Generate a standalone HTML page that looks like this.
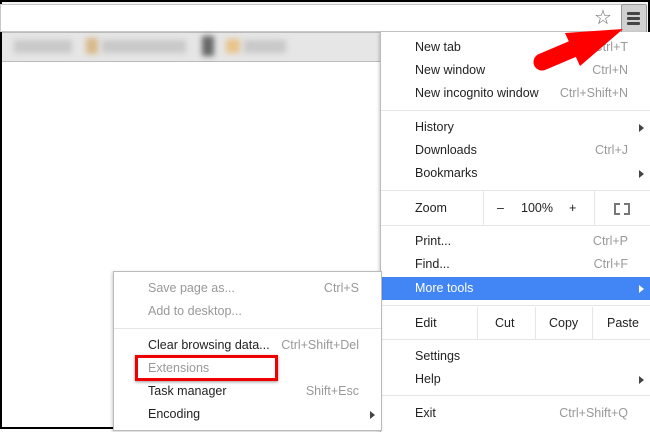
<!DOCTYPE html><html><head><style>
*{margin:0;padding:0;box-sizing:border-box}
body{width:650px;height:429px;overflow:hidden;background:#fff;font-family:"Liberation Sans",sans-serif;font-size:12.5px;color:#222;position:relative;border:2px solid #000}
.a{position:absolute}
.it{position:absolute;left:0;right:0;height:23px;line-height:23px}
.it .l{position:absolute;left:34px}
.it .r{position:absolute;right:22px;color:#999}
.sep{position:absolute;left:0;right:0;height:1px;background:#e6e6e6}
.tri{position:absolute;right:6px;top:8px;width:0;height:0;border-left:5px solid #444;border-top:4px solid transparent;border-bottom:4px solid transparent}
.g{color:#999}
</style></head><body>
<div class="a" style="left:0;top:0;width:646px;height:30px;background:#f2f2f2"></div>
<div class="a" style="left:-2px;top:2px;width:622px;height:28px;background:#fff;border:1px solid #c8c8c8"></div>
<div class="a" style="left:0;top:30px;width:646px;height:30px;background:#e6e6e6;border-top:1px solid #bbb;border-bottom:1px solid #bbb"></div>
<div class="a" style="left:12px;top:38px;width:58px;height:13px;background:#c8c8c8;filter:blur(3px)"></div>
<div class="a" style="left:84px;top:36px;width:12px;height:16px;background:#d8b888;filter:blur(3px)"></div>
<div class="a" style="left:100px;top:38px;width:84px;height:13px;background:#c8c8c8;filter:blur(3px)"></div>
<div class="a" style="left:200px;top:34px;width:12px;height:20px;background:#666;filter:blur(3px)"></div>
<div class="a" style="left:224px;top:37px;width:14px;height:14px;background:#e8c28a;filter:blur(3px)"></div>
<div class="a" style="left:242px;top:38px;width:42px;height:13px;background:#c8c8c8;filter:blur(3px)"></div>
<div class="a" style="left:592px;top:6px;font-size:20px;color:#666;line-height:20px">☆</div>
<div class="a" style="left:619px;top:2px;width:26px;height:29px;background:#d0d0d0;border:1px solid #999;border-radius:2px"></div>
<div class="a" style="left:625px;top:10px;width:13px;height:3px;background:#444;box-shadow:0 5px 0 #444,0 10px 0 #444;border-radius:1px"></div>

<div class="a" style="left:378px;top:30px;width:270px;height:400px;background:#fff;border-left:1px solid #bbb;box-shadow:-1px 1px 3px rgba(0,0,0,.2)">
<div class="it" style="top:4px"><span class="l">New tab</span><span class="r">Ctrl+T</span></div>
<div class="it" style="top:27px"><span class="l">New window</span><span class="r">Ctrl+N</span></div>
<div class="it" style="top:50px"><span class="l">New incognito window</span><span class="r">Ctrl+Shift+N</span></div>
<div class="sep" style="top:78px"></div>
<div class="it" style="top:84px"><span class="l">History</span><span class="tri"></span></div>
<div class="it" style="top:107px"><span class="l">Downloads</span><span class="r">Ctrl+J</span></div>
<div class="it" style="top:130px"><span class="l">Bookmarks</span><span class="tri"></span></div>
<div class="sep" style="top:158px"></div>
<div class="it" style="top:165px"><span class="l">Zoom</span>
<span class="a" style="left:102px;top:-6px;width:1px;height:34px;background:#e6e6e6"></span>
<span class="a" style="left:116px">–</span><span class="a" style="left:140px">100%</span><span class="a" style="left:188px">+</span>
<span class="a" style="left:213px;top:-6px;width:1px;height:34px;background:#e6e6e6"></span>
<span class="a" style="left:233px;top:6px;width:16px;height:12px;border:2px dashed #777"></span></div>
<div class="sep" style="top:193px"></div>
<div class="it" style="top:198px"><span class="l">Print...</span><span class="r">Ctrl+P</span></div>
<div class="it" style="top:221px"><span class="l">Find...</span><span class="r">Ctrl+F</span></div>
<div class="it" style="top:245px;background:#4285f4;color:#fff"><span class="l">More tools</span><span class="tri" style="border-left-color:#fff"></span></div>
<div class="sep" style="top:273px"></div>
<div class="it" style="top:280px"><span class="l">Edit</span>
<span class="a" style="left:96px;top:-5px;width:1px;height:32px;background:#e6e6e6"></span><span class="a" style="left:114px">Cut</span>
<span class="a" style="left:154px;top:-5px;width:1px;height:32px;background:#e6e6e6"></span><span class="a" style="left:168px">Copy</span>
<span class="a" style="left:211px;top:-5px;width:1px;height:32px;background:#e6e6e6"></span><span class="a" style="left:226px">Paste</span></div>
<div class="sep" style="top:307px"></div>
<div class="it" style="top:313px"><span class="l">Settings</span></div>
<div class="it" style="top:336px"><span class="l">Help</span><span class="tri"></span></div>
<div class="sep" style="top:363px"></div>
<div class="it" style="top:370px"><span class="l">Exit</span><span class="r">Ctrl+Shift+Q</span></div>
</div>

<div class="a" style="left:111px;top:269px;width:269px;height:160px;background:#fff;border:1px solid #bbb;box-shadow:-1px 1px 3px rgba(0,0,0,.2)">
<div class="it g" style="top:5px"><span class="l">Save page as...</span><span class="r">Ctrl+S</span></div>
<div class="it g" style="top:28px"><span class="l">Add to desktop...</span></div>
<div class="sep" style="top:56px"></div>
<div class="it" style="top:62px"><span class="l">Clear browsing data...</span><span class="r">Ctrl+Shift+Del</span></div>
<div class="it g" style="top:85px"><span class="l">Extensions</span></div>
<div class="it" style="top:108px"><span class="l">Task manager</span><span class="r">Shift+Esc</span></div>
<div class="it" style="top:131px"><span class="l">Encoding</span><span class="tri"></span></div>
</div>
<div class="a" style="left:133px;top:353px;width:143px;height:26px;border:3px solid #e00;box-shadow:0 1px 3px rgba(0,0,0,.4)"></div>

<svg class="a" style="left:0;top:0" width="650" height="429">
<line x1="540" y1="60" x2="580" y2="43" stroke="#f00" stroke-width="17" stroke-linecap="round"/>
<polygon points="563,31 621,27 578,64" fill="#f00"/>
</svg>
</body></html>
